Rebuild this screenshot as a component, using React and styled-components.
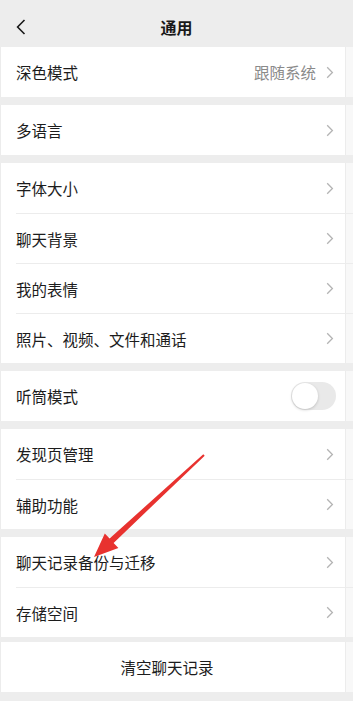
import React from 'react';
import styled, { createGlobalStyle } from 'styled-components';

const GlobalStyle = createGlobalStyle`
  html, body {
    margin: 0;
    padding: 0;
    background: #ededed;
    font-family: "Noto Sans CJK SC", "Noto Sans", sans-serif;
  }
`;

export const Page = styled.div`
  position: relative;
  width: 353px;
  height: 701px;
  overflow: hidden;
  background: #ededed;
`;

export const Header = styled.div`
  height: 47px;
  box-sizing: border-box;
  padding-top: 6px;
  display: grid;
  grid-template-columns: 48px 1fr 48px;
  align-items: center;
  color: #191919;
`;

export const Back = styled.div`
  display: flex;
  align-items: center;
  padding-left: 16px;
`;

export const Title = styled.div`
  text-align: center;
  font-size: 16px;
  font-weight: 700;
`;

export const Group = styled.div`
  background: #fff;
  margin-bottom: ${(p) => p.gap ?? 8}px;
  box-shadow: inset -7px 0 0 #f8f8f8, inset -8px 0 0 #ececec, inset 1px 0 0 #ececec;
`;

export const Row = styled.div`
  padding-left: 16px;
  &:not(:first-child) > div {
    border-top: 1px solid #ececec;
  }
`;

export const RowInner = styled.div`
  height: 50px;
  box-sizing: border-box;
  display: flex;
  align-items: center;
  justify-content: ${(p) => (p.center ? 'center' : 'space-between')};
  padding-right: 19px;
  margin-left: ${(p) => (p.center ? '-16px' : '0')};
  font-size: 15.5px;
  color: #1c1c1c;
`;

export const Right = styled.div`
  display: flex;
  align-items: center;
  gap: 10px;
  color: #8a8a8a;
  font-size: 15.5px;
`;

export const Toggle = styled.div`
  width: 45px;
  height: 28px;
  border-radius: 14px;
  background: #e9e9e9;
  margin-right: -2px;
  display: flex;
  align-items: center;
  padding-left: 1px;
  box-sizing: border-box;
  & span {
    width: 26px;
    height: 26px;
    border-radius: 50%;
    background: #fff;
    box-shadow: 0 1px 3px rgba(0, 0, 0, 0.18);
  }
`;

export const Arrow = styled.svg`
  position: absolute;
  left: 0;
  top: 0;
  pointer-events: none;
`;

const Chevron = () => (
  <svg width="8" height="13" viewBox="0 0 8 13">
    <path d="M1.2 1.2 L6.4 6.5 L1.2 11.8" fill="none" stroke="#b4b4b4" strokeWidth="1.3" />
  </svg>
);

const groups = [
  [{ label: '深色模式', value: '跟随系统' }],
  [{ label: '多语言' }],
  [{ label: '字体大小' }, { label: '聊天背景' }, { label: '我的表情' }, { label: '照片、视频、文件和通话' }],
  [{ label: '听筒模式', toggle: true }],
  [{ label: '发现页管理' }, { label: '辅助功能' }],
  [{ label: '聊天记录备份与迁移' }, { label: '存储空间' }],
];

export default function App() {
  return (
    <Page>
      <GlobalStyle />
      <Header>
        <Back>
          <svg width="10" height="16" viewBox="0 0 10 16">
            <path d="M8.5 1 L1.6 8 L8.5 15" fill="none" stroke="#191919" strokeWidth="1.6" />
          </svg>
        </Back>
        <Title>通用</Title>
        <div />
      </Header>
      {groups.map((items, i) => (
        <Group key={i} gap={i === groups.length - 1 ? 5 : 8}>
          {items.map((item) => (
            <Row key={item.label}>
              <RowInner>
                <span>{item.label}</span>
                {item.toggle ? (
                  <Toggle><span /></Toggle>
                ) : (
                  <Right>
                    {item.value && <span>{item.value}</span>}
                    <Chevron />
                  </Right>
                )}
              </RowInner>
            </Row>
          ))}
        </Group>
      ))}
      <Group>
        <Row>
          <RowInner center>清空聊天记录</RowInner>
        </Row>
      </Group>
      <Arrow width="353" height="701" viewBox="0 0 353 701">
        <path
          d="M203.3 454.3 L204.7 455.7 L113.6 542.9 L118.4 548 L94 557 L104.8 533.4 L109.6 538.5 Z"
          fill="#e8322f"
        />
      </Arrow>
    </Page>
  );
}
